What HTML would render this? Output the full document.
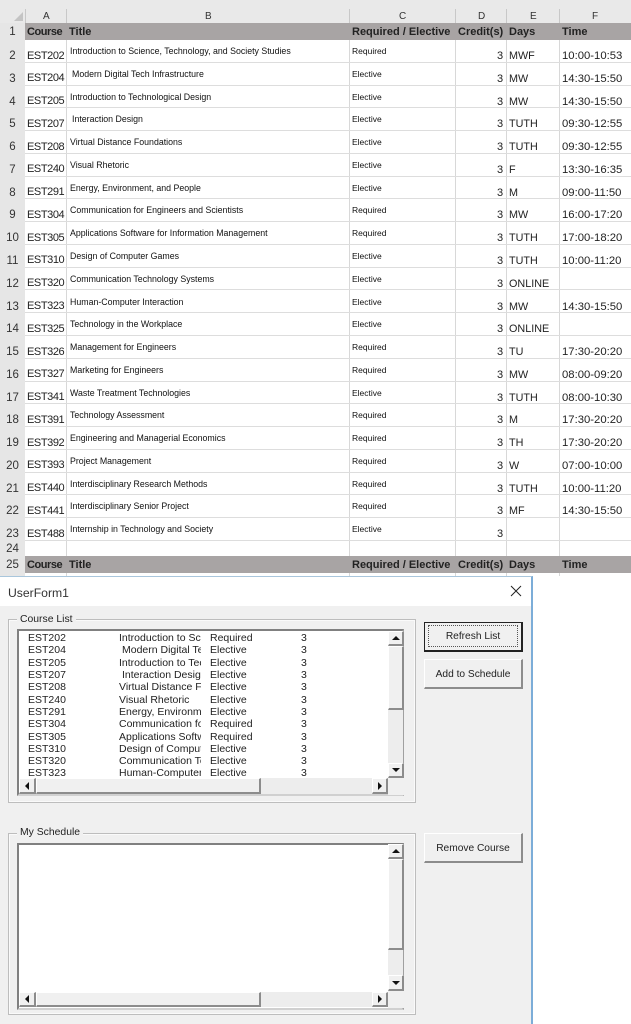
<!DOCTYPE html>
<html><head><meta charset="utf-8"><style>
html,body{margin:0;padding:0;background:#fff}
#p{position:relative;width:631px;height:1024px;overflow:hidden;background:#fff;font-family:"Liberation Sans",sans-serif;color:#222}
#p div,#p span{position:absolute;white-space:nowrap}
.h{left:0;top:0;width:631px;height:23px;background:#e9e9e9}
.tri{left:14px;top:12px;width:0;height:0;border-left:9px solid transparent;border-bottom:9px solid #c4c4c4}
.cl{font-size:10px;top:11px;color:#333}
.vl{top:23px;width:1px;height:553px;background:#d8d8d8}
.vh{top:9px;width:1px;height:14px;background:#c8c8c8}
.rh{left:0;top:23px;width:25px;height:553px;background:#e6e6e6}
.g{left:25px;width:606px;height:17px;background:#a8a4a4}
.g span{font-weight:bold;font-size:11px;top:3px;color:#222}
.g .k{letter-spacing:-.45px}
.r{left:0;width:631px;height:22.8px}
.r:after{content:"";position:absolute;left:25px;right:0;bottom:0;height:1px;background:#ddd}
.n{left:0;width:25px;text-align:center;font-size:11.5px;top:10px;color:#333}
.a{left:27px;font-size:11px;top:9.5px;letter-spacing:-.42px}
.t{left:70px;font-size:8.8px;top:6px;color:#111}
.t2{left:72px}
.c{left:352px;font-size:8.5px;top:6px;color:#111}
.d{left:497px;font-size:11px;top:10px}
.e{left:509px;font-size:10.8px;top:10px}
.f{left:562px;font-size:11.3px;top:10px}
.form{left:0;top:576px;width:531px;height:448px;background:#f0f0f0;border-right:2px solid #7cadd8;border-top:1px solid #a9c6dc}
.tb{left:0;top:0;width:531px;height:29px;background:#fff}
.fr{border:1px solid #bdbdbd;box-shadow:inset 0 0 0 1px #fafafa;box-sizing:border-box}
.lg{background:#f0f0f0;font-size:10.4px;padding:0 3px;color:#222}
.lb{background:#fff;border:2px solid #808080;border-right-color:#a0a0a0;border-bottom-color:#d0d0d0;box-sizing:border-box}
.bt{background:#f0f0f0;border-top:1px solid #fff;border-left:1px solid #fff;border-right:2px solid #8c8c8c;border-bottom:2px solid #8c8c8c;box-sizing:border-box;text-align:center}
.hat{background:#ededed}
.btn{background:#f0f0f0;border:1px solid #fff;border-right:2px solid #8c8c8c;border-bottom:2px solid #8c8c8c;box-sizing:border-box;text-align:center;font-size:10.2px;color:#222}
.l span{font-size:10.5px;color:#222}
.up{width:0;height:0;border-left:4px solid transparent;border-right:4px solid transparent;border-bottom:4px solid #111}
.dn{width:0;height:0;border-left:4px solid transparent;border-right:4px solid transparent;border-top:4px solid #111}
.lf{width:0;height:0;border-top:4px solid transparent;border-bottom:4px solid transparent;border-right:4px solid #111}
.rt{width:0;height:0;border-top:4px solid transparent;border-bottom:4px solid transparent;border-left:4px solid #111}
</style></head><body><div id="p">
<div class="h"></div>
<div class="tri"></div>
<div class="rh"></div>
<div class="vh" style="left:25px"></div><div class="vh" style="left:66px"></div><div class="vh" style="left:349px"></div><div class="vh" style="left:455px"></div><div class="vh" style="left:506px"></div><div class="vh" style="left:559px"></div>
<span class="cl" style="left:43px">A</span><span class="cl" style="left:205px">B</span><span class="cl" style="left:399px">C</span><span class="cl" style="left:478px">D</span><span class="cl" style="left:530px">E</span><span class="cl" style="left:592px">F</span>
<div class="vl" style="left:66px"></div><div class="vl" style="left:349px"></div><div class="vl" style="left:455px"></div><div class="vl" style="left:506px"></div><div class="vl" style="left:559px"></div>

<div class="g" style="top:23px"><span class="k" style="left:2px">Course</span><span style="left:44px">Title</span><span style="left:327px">Required / Elective</span><span style="left:433px">Credit(s)</span><span style="left:484px">Days</span><span style="left:537px">Time</span></div>
<span class="n" style="top:26px">1</span>

<div class="r" style="top:40px"><span class="n">2</span><span class="a">EST202</span><span class="t">Introduction to Science, Technology, and Society Studies</span><span class="c">Required</span><span class="d">3</span><span class="e">MWF</span><span class="f">10:00-10:53</span></div>
<div class="r" style="top:62.8px"><span class="n">3</span><span class="a">EST204</span><span class="t t2">Modern Digital Tech Infrastructure</span><span class="c">Elective</span><span class="d">3</span><span class="e">MW</span><span class="f">14:30-15:50</span></div>
<div class="r" style="top:85.6px"><span class="n">4</span><span class="a">EST205</span><span class="t">Introduction to Technological Design</span><span class="c">Elective</span><span class="d">3</span><span class="e">MW</span><span class="f">14:30-15:50</span></div>
<div class="r" style="top:108.3px"><span class="n">5</span><span class="a">EST207</span><span class="t t2">Interaction Design</span><span class="c">Elective</span><span class="d">3</span><span class="e">TUTH</span><span class="f">09:30-12:55</span></div>
<div class="r" style="top:131.1px"><span class="n">6</span><span class="a">EST208</span><span class="t">Virtual Distance Foundations</span><span class="c">Elective</span><span class="d">3</span><span class="e">TUTH</span><span class="f">09:30-12:55</span></div>
<div class="r" style="top:153.9px"><span class="n">7</span><span class="a">EST240</span><span class="t">Visual Rhetoric</span><span class="c">Elective</span><span class="d">3</span><span class="e">F</span><span class="f">13:30-16:35</span></div>
<div class="r" style="top:176.6px"><span class="n">8</span><span class="a">EST291</span><span class="t">Energy, Environment, and People</span><span class="c">Elective</span><span class="d">3</span><span class="e">M</span><span class="f">09:00-11:50</span></div>
<div class="r" style="top:199.4px"><span class="n">9</span><span class="a">EST304</span><span class="t">Communication for Engineers and Scientists</span><span class="c">Required</span><span class="d">3</span><span class="e">MW</span><span class="f">16:00-17:20</span></div>
<div class="r" style="top:222.2px"><span class="n">10</span><span class="a">EST305</span><span class="t">Applications Software for Information Management</span><span class="c">Required</span><span class="d">3</span><span class="e">TUTH</span><span class="f">17:00-18:20</span></div>
<div class="r" style="top:244.9px"><span class="n">11</span><span class="a">EST310</span><span class="t">Design of Computer Games</span><span class="c">Elective</span><span class="d">3</span><span class="e">TUTH</span><span class="f">10:00-11:20</span></div>
<div class="r" style="top:267.7px"><span class="n">12</span><span class="a">EST320</span><span class="t">Communication Technology Systems</span><span class="c">Elective</span><span class="d">3</span><span class="e">ONLINE</span></div>
<div class="r" style="top:290.5px"><span class="n">13</span><span class="a">EST323</span><span class="t">Human-Computer Interaction</span><span class="c">Elective</span><span class="d">3</span><span class="e">MW</span><span class="f">14:30-15:50</span></div>
<div class="r" style="top:313.3px"><span class="n">14</span><span class="a">EST325</span><span class="t">Technology in the Workplace</span><span class="c">Elective</span><span class="d">3</span><span class="e">ONLINE</span></div>
<div class="r" style="top:336px"><span class="n">15</span><span class="a">EST326</span><span class="t">Management for Engineers</span><span class="c">Required</span><span class="d">3</span><span class="e">TU</span><span class="f">17:30-20:20</span></div>
<div class="r" style="top:358.8px"><span class="n">16</span><span class="a">EST327</span><span class="t">Marketing for Engineers</span><span class="c">Required</span><span class="d">3</span><span class="e">MW</span><span class="f">08:00-09:20</span></div>
<div class="r" style="top:381.6px"><span class="n">17</span><span class="a">EST341</span><span class="t">Waste Treatment Technologies</span><span class="c">Elective</span><span class="d">3</span><span class="e">TUTH</span><span class="f">08:00-10:30</span></div>
<div class="r" style="top:404.3px"><span class="n">18</span><span class="a">EST391</span><span class="t">Technology Assessment</span><span class="c">Required</span><span class="d">3</span><span class="e">M</span><span class="f">17:30-20:20</span></div>
<div class="r" style="top:427.1px"><span class="n">19</span><span class="a">EST392</span><span class="t">Engineering and Managerial Economics</span><span class="c">Required</span><span class="d">3</span><span class="e">TH</span><span class="f">17:30-20:20</span></div>
<div class="r" style="top:449.9px"><span class="n">20</span><span class="a">EST393</span><span class="t">Project Management</span><span class="c">Required</span><span class="d">3</span><span class="e">W</span><span class="f">07:00-10:00</span></div>
<div class="r" style="top:472.6px"><span class="n">21</span><span class="a">EST440</span><span class="t">Interdisciplinary Research Methods</span><span class="c">Required</span><span class="d">3</span><span class="e">TUTH</span><span class="f">10:00-11:20</span></div>
<div class="r" style="top:495.4px"><span class="n">22</span><span class="a">EST441</span><span class="t">Interdisciplinary Senior Project</span><span class="c">Required</span><span class="d">3</span><span class="e">MF</span><span class="f">14:30-15:50</span></div>
<div class="r" style="top:518px"><span class="n">23</span><span class="a">EST488</span><span class="t">Internship in Technology and Society</span><span class="c">Elective</span><span class="d">3</span></div>
<span class="n" style="top:543px">24</span>
<div class="g" style="top:556px"><span class="k" style="left:2px">Course</span><span style="left:44px">Title</span><span style="left:327px">Required / Elective</span><span style="left:433px">Credit(s)</span><span style="left:484px">Days</span><span style="left:537px">Time</span></div>
<span class="n" style="top:559px">25</span>

<div class="form">
<div class="tb"></div>
<span style="left:8px;top:9px;font-size:12.2px;color:#333">UserForm1</span>
<svg style="position:absolute;left:510px;top:8px" width="12" height="12" viewBox="0 0 12 12"><path d="M1 1L11 11M11 1L1 11" stroke="#222" stroke-width="1" fill="none"/></svg>

<div class="fr" style="left:8px;top:42px;width:408px;height:184px"></div>
<span class="lg" style="left:17px;top:37px">Course List</span>
<div class="lb" style="left:17px;top:52px;width:387px;height:167px"></div>
<div class="l" style="left:0;top:1px">
<span style="left:28px;top:54px">EST202</span><span style="left:119px;top:54px;width:82px;overflow:hidden">Introduction to Science</span><span style="left:210px;top:54px">Required</span><span style="left:301px;top:54px">3</span>
<span style="left:28px;top:66px">EST204</span><span style="left:122px;top:66px;width:79px;overflow:hidden">Modern Digital Tech</span><span style="left:210px;top:66px">Elective</span><span style="left:301px;top:66px">3</span>
<span style="left:28px;top:79px">EST205</span><span style="left:119px;top:79px;width:82px;overflow:hidden">Introduction to Technological</span><span style="left:210px;top:79px">Elective</span><span style="left:301px;top:79px">3</span>
<span style="left:28px;top:91px">EST207</span><span style="left:122px;top:91px;width:79px;overflow:hidden">Interaction Design</span><span style="left:210px;top:91px">Elective</span><span style="left:301px;top:91px">3</span>
<span style="left:28px;top:103px">EST208</span><span style="left:119px;top:103px;width:82px;overflow:hidden">Virtual Distance Foundations</span><span style="left:210px;top:103px">Elective</span><span style="left:301px;top:103px">3</span>
<span style="left:28px;top:116px">EST240</span><span style="left:119px;top:116px;width:82px;overflow:hidden">Visual Rhetoric</span><span style="left:210px;top:116px">Elective</span><span style="left:301px;top:116px">3</span>
<span style="left:28px;top:128px">EST291</span><span style="left:119px;top:128px;width:82px;overflow:hidden">Energy, Environment</span><span style="left:210px;top:128px">Elective</span><span style="left:301px;top:128px">3</span>
<span style="left:28px;top:140px">EST304</span><span style="left:119px;top:140px;width:82px;overflow:hidden">Communication for Engineers</span><span style="left:210px;top:140px">Required</span><span style="left:301px;top:140px">3</span>
<span style="left:28px;top:153px">EST305</span><span style="left:119px;top:153px;width:82px;overflow:hidden">Applications Software</span><span style="left:210px;top:153px">Required</span><span style="left:301px;top:153px">3</span>
<span style="left:28px;top:165px">EST310</span><span style="left:119px;top:165px;width:82px;overflow:hidden">Design of Computer Games</span><span style="left:210px;top:165px">Elective</span><span style="left:301px;top:165px">3</span>
<span style="left:28px;top:177px">EST320</span><span style="left:119px;top:177px;width:82px;overflow:hidden">Communication Technology</span><span style="left:210px;top:177px">Elective</span><span style="left:301px;top:177px">3</span>
<span style="left:28px;top:189px">EST323</span><span style="left:119px;top:189px;width:82px;overflow:hidden">Human-Computer Interaction</span><span style="left:210px;top:189px">Elective</span><span style="left:301px;top:189px">3</span>
</div>
<!-- list scrollbars -->
<div class="bt" style="left:388px;top:54px;width:16px;height:15px"></div><div class="up" style="left:392px;top:59px"></div>
<div class="bt" style="left:388px;top:69px;width:16px;height:64px"></div>
<div class="hat" style="left:388px;top:133px;width:15px;height:53px"></div>
<div class="bt" style="left:388px;top:186px;width:16px;height:15px"></div><div class="dn" style="left:392px;top:191px"></div>
<div class="hat" style="left:36px;top:201px;width:336px;height:16px"></div>
<div class="bt" style="left:19px;top:201px;width:17px;height:16px"></div><div class="lf" style="left:25px;top:205px"></div>
<div class="bt" style="left:36px;top:201px;width:225px;height:16px"></div>
<div class="bt" style="left:372px;top:201px;width:16px;height:16px"></div><div class="rt" style="left:378px;top:205px"></div>
<div style="left:388px;top:201px;width:16px;height:17px;background:#f0f0f0"></div>

<div class="fr" style="left:8px;top:256px;width:408px;height:182px"></div>
<span class="lg" style="left:17px;top:250px">My Schedule</span>
<div class="lb" style="left:17px;top:266px;width:387px;height:167px"></div>
<div class="bt" style="left:388px;top:267px;width:16px;height:15px"></div><div class="up" style="left:392px;top:272px"></div>
<div class="bt" style="left:388px;top:282px;width:16px;height:91px"></div>
<div class="hat" style="left:388px;top:373px;width:15px;height:25px"></div>
<div class="bt" style="left:388px;top:398px;width:16px;height:16px"></div><div class="dn" style="left:392px;top:404px"></div>
<div class="hat" style="left:36px;top:415px;width:336px;height:15px"></div>
<div class="bt" style="left:19px;top:415px;width:17px;height:15px"></div><div class="lf" style="left:25px;top:418px"></div>
<div class="bt" style="left:36px;top:415px;width:225px;height:15px"></div>
<div class="bt" style="left:372px;top:415px;width:16px;height:15px"></div><div class="rt" style="left:378px;top:418px"></div>
<div style="left:388px;top:414px;width:16px;height:17px;background:#f0f0f0"></div>

<div style="left:424px;top:45px;width:99px;height:30px;box-sizing:border-box;border:1px solid #222;border-right-width:2px;border-bottom-width:2px;background:#f0f0f0"></div>
<div style="left:428px;top:48px;width:90px;height:22px;box-sizing:border-box;border:1px dotted #555"></div>
<span style="left:424px;top:54px;width:98px;text-align:center;font-size:10.2px">Refresh List</span>
<div class="btn" style="left:424px;top:82px;width:99px;height:30px;line-height:29px">Add to Schedule</div>
<div class="btn" style="left:424px;top:256px;width:99px;height:30px;line-height:29px">Remove Course</div>
</div>
</div></body></html>
